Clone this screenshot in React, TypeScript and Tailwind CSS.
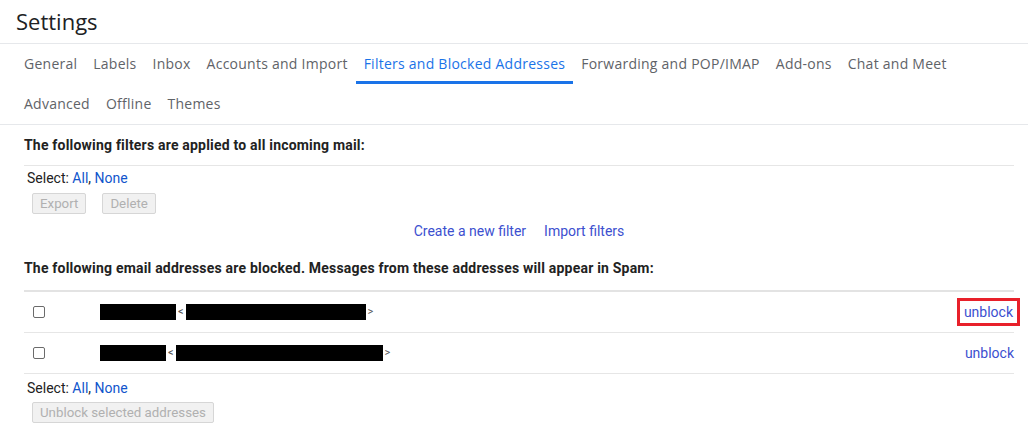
const tabsRow1 = [
  'General',
  'Labels',
  'Inbox',
  'Accounts and Import',
  'Filters and Blocked Addresses',
  'Forwarding and POP/IMAP',
  'Add-ons',
  'Chat and Meet'
]
const tabsRow2 = ['Advanced', 'Offline', 'Themes']

function Tab({ label, active }: { label: string; active?: boolean }) {
  return (
    <div
      className={
        'h-10 px-2 flex items-center border-b-[3px] ' +
        (active ? 'border-[#1a73e8] text-[#1a73e8]' : 'border-transparent text-[#5f6368]')
      }
    >
      <span className="pt-[2px]">{label}</span>
    </div>
  )
}

function SelectLine() {
  return (
    <div className="text-[14px] leading-5 text-[#222]">
      Select: <span className="text-[#1155cc]">All</span>, <span className="text-[#1155cc]">None</span>
    </div>
  )
}

function GreyButton({ label }: { label: string }) {
  return (
    <div className="h-[21px] px-[7px] flex items-center border border-[#d6d6d6] bg-[#f1f1f1] rounded-[2px] text-[13.3px] text-[#b0b0b0]">
      {label}
    </div>
  )
}

function Checkbox() {
  return <div className="w-[12px] h-[12px] border border-[#6b6b6b] rounded-[2px] bg-white" />
}

function BlockedRow({
  nameW,
  addrW,
  highlight
}: {
  nameW: number
  addrW: number
  highlight?: boolean
}) {
  return (
    <div className="h-[41px] flex items-center border-b border-[#e6e6e6]">
      <div className="w-[76px] pl-[9px] flex items-center">
        <Checkbox />
      </div>
      <div className="flex items-center text-[11px] text-[#555]">
        <div className="h-[16px] bg-black" style={{ width: nameW }} />
        <span className="px-[2px]">&lt;</span>
        <div className="h-[16px] bg-black" style={{ width: addrW }} />
        <span className="pl-[2px]">&gt;</span>
      </div>
      <div className="flex-1" />
      <div
        className={
          'text-[14px] text-[#3c4fcf] flex items-center ' +
          (highlight ? 'border-[3px] border-[#e8202a] h-[28px] px-[4px] -mr-[6px]' : '')
        }
      >
        unblock
      </div>
    </div>
  )
}

export default function App() {
  return (
    <div
      className="w-[1028px] h-[426px] overflow-hidden bg-white"
      style={{ fontFamily: 'Roboto, "Liberation Sans", sans-serif' }}
    >
      <div
        className="h-[44px] pl-4 flex items-center text-[22px] text-[#202124] border-b border-[#e6e8eb]"
        style={{ fontFamily: '"Open Sans", Roboto, sans-serif' }}
      >
        Settings
      </div>
      <div
        className="pl-4 border-b border-[#e6e8eb] text-[14px] tracking-[0.25px]"
        style={{ fontFamily: '"Open Sans", Roboto, sans-serif' }}
      >
        <div className="flex">
          {tabsRow1.map((t) => (
            <Tab key={t} label={t} active={t === 'Filters and Blocked Addresses'} />
          ))}
        </div>
        <div className="flex">
          {tabsRow2.map((t) => (
            <Tab key={t} label={t} />
          ))}
        </div>
      </div>
      <div className="pl-6 pr-[14px]">
        <div className="h-[41px] flex items-center border-b border-[#e6e6e6] text-[14px] tracking-[0.2px] font-bold text-[#222]">
          The following filters are applied to all incoming mail:
        </div>
        <div className="pl-[3px] pt-[2px]">
          <SelectLine />
        </div>
        <div className="flex gap-4 pl-2 pt-[5px]">
          <GreyButton label="Export" />
          <GreyButton label="Delete" />
        </div>
        <div className="flex justify-center gap-[18px] pt-[7px] leading-5 text-[14px] text-[#3c4fcf]">
          <span>Create a new filter</span>
          <span>Import filters</span>
        </div>
        <div className="h-[51px] pt-[6px] flex items-center border-b-2 border-[#e3e3e3] text-[14px] tracking-[0.2px] font-bold text-[#222]">
          The following email addresses are blocked. Messages from these addresses will appear in Spam:
        </div>
        <BlockedRow nameW={76} addrW={180} highlight />
        <BlockedRow nameW={66} addrW={207} />
        <div className="pl-[3px] pt-[4px]">
          <SelectLine />
        </div>
        <div className="flex pl-2 pt-[4px]">
          <GreyButton label="Unblock selected addresses" />
        </div>
      </div>
    </div>
  )
}
